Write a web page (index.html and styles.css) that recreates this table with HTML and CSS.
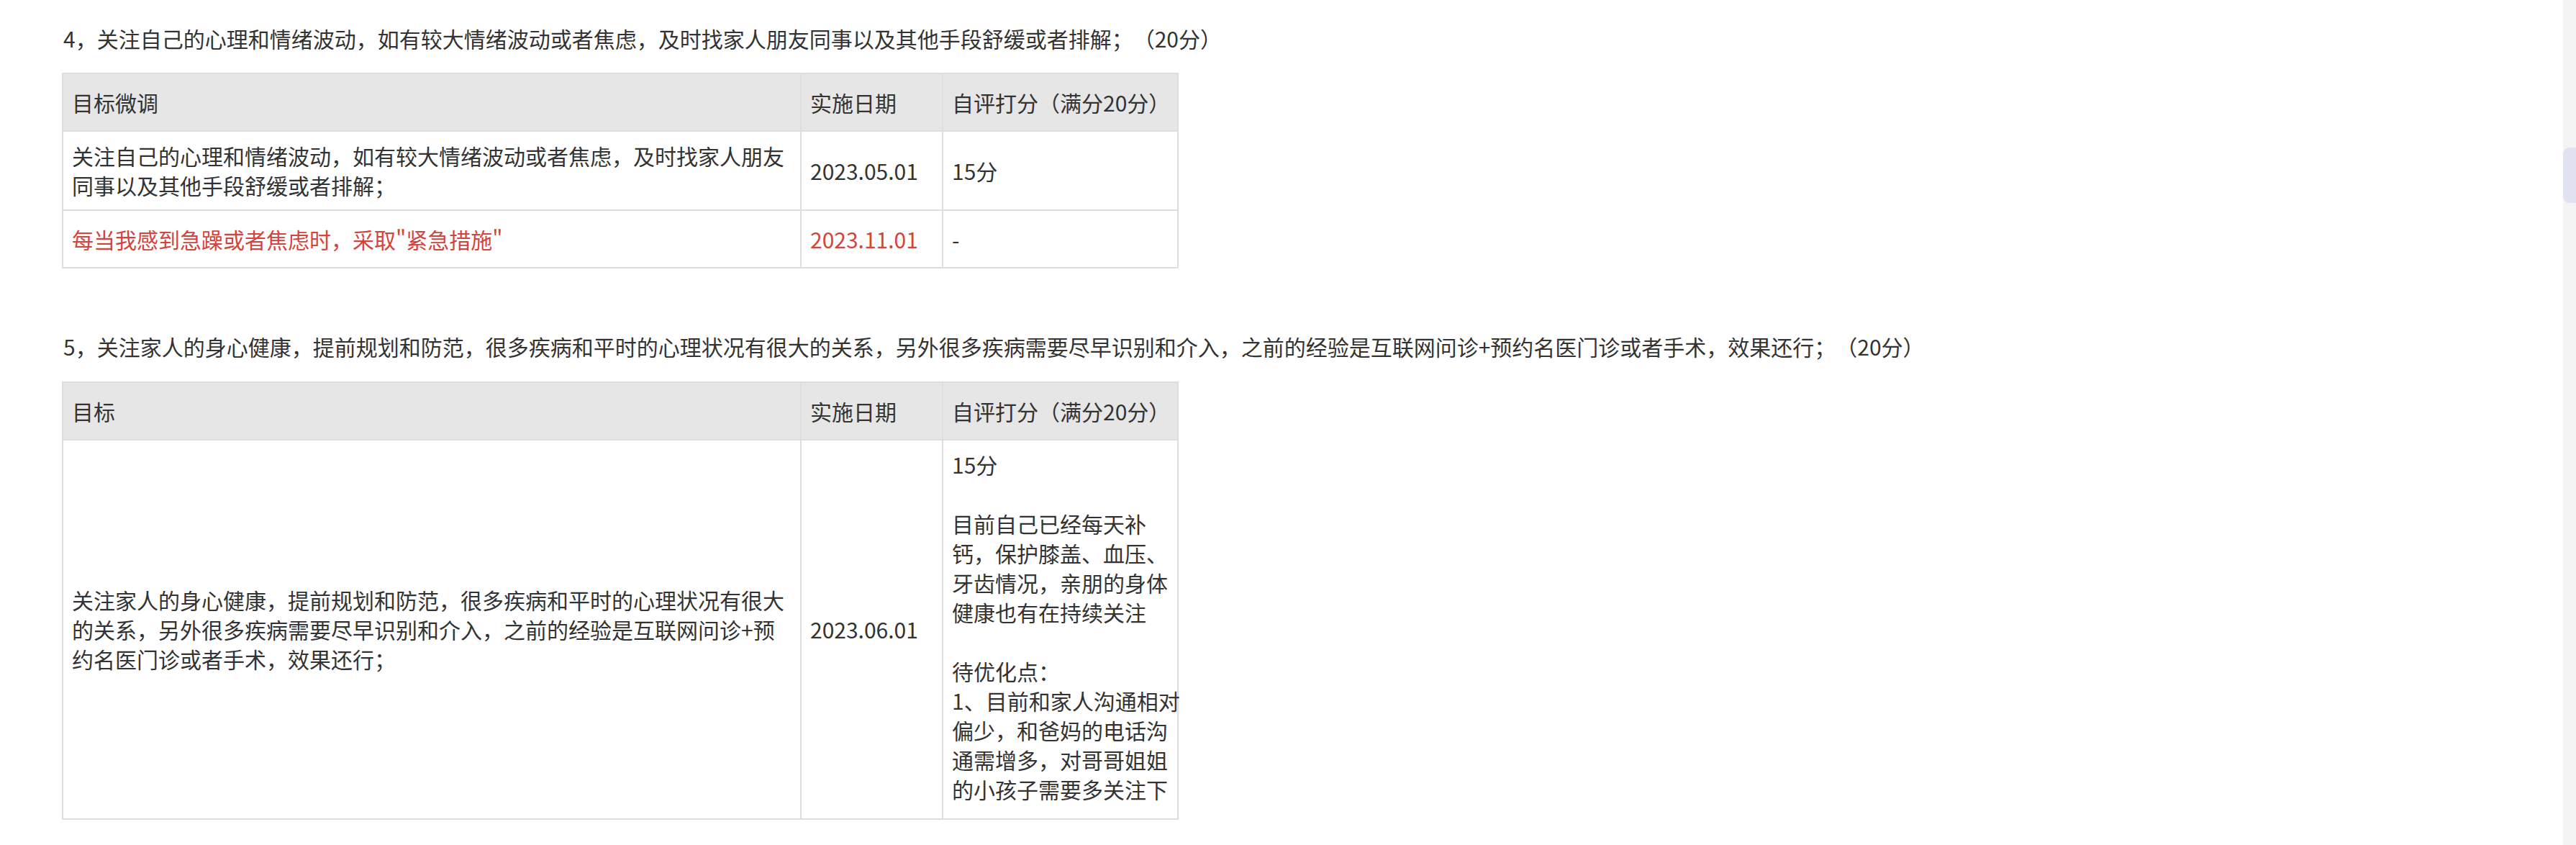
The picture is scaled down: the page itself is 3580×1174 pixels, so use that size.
FILE: index.html
```html
<!DOCTYPE html>
<html lang="zh-CN">
<head>
<meta charset="utf-8">
<title>目标自评</title>
<link rel="stylesheet" href="styles.css">
</head>
<body>
<main class="doc">
  <p class="item">4，关注自己的心理和情绪波动，如有较大情绪波动或者焦虑，及时找家人朋友同事以及其他手段舒缓或者排解；（20分）</p>
  <table class="grid">
    <colgroup><col class="c-goal"><col class="c-date"><col class="c-score"></colgroup>
    <thead>
      <tr><th>目标微调</th><th>实施日期</th><th>自评打分（满分20分）</th></tr>
    </thead>
    <tbody>
      <tr><td>关注自己的心理和情绪波动，如有较大情绪波动或者焦虑，及时找家人朋友同事以及其他手段舒缓或者排解；</td><td>2023.05.01</td><td>15分</td></tr>
      <tr class="urgent"><td>每当我感到急躁或者焦虑时，采取"紧急措施"</td><td>2023.11.01</td><td>-</td></tr>
    </tbody>
  </table>

  <p class="item item-next">5，关注家人的身心健康，提前规划和防范，很多疾病和平时的心理状况有很大的关系，另外很多疾病需要尽早识别和介入，之前的经验是互联网问诊+预约名医门诊或者手术，效果还行；（20分）</p>
  <table class="grid">
    <colgroup><col class="c-goal"><col class="c-date"><col class="c-score"></colgroup>
    <thead>
      <tr><th>目标</th><th>实施日期</th><th>自评打分（满分20分）</th></tr>
    </thead>
    <tbody>
      <tr>
        <td>关注家人的身心健康，提前规划和防范，很多疾病和平时的心理状况有很大的关系，另外很多疾病需要尽早识别和介入，之前的经验是互联网问诊+预约名医门诊或者手术，效果还行；</td>
        <td>2023.06.01</td>
        <td class="notes">15分<br><br>目前自己已经每天补<br>钙，保护膝盖、血压、<br>牙齿情况，亲朋的身体<br>健康也有在持续关注<br><br>待优化点：<br>1、目前和家人沟通相对<br>偏少，和爸妈的电话沟<br>通需增多，对哥哥姐姐<br>的小孩子需要多关注下</td>
      </tr>
    </tbody>
  </table>
</main>
<div class="scrollbar"><div class="thumb"></div></div>
</body>
</html>
```

FILE: styles.css
```css
html, body {
  margin: 0;
  padding: 0;
  background: #ffffff;
  overflow: hidden;
}

body {
  font-family: "Noto Sans CJK SC", "Noto Sans", sans-serif;
  font-size: 30px;
  line-height: 41px;
  color: #333333;
}

.doc {
  padding: 33px 0 0 86px;
}

.item {
  margin: 0 0 27px 2px;
  text-spacing-trim: space-all;
}

.item-next {
  margin-top: 88px;
  margin-bottom: 28px;
}

.grid {
  border-collapse: collapse;
  table-layout: fixed;
  width: 1550px;
}

.c-goal { width: 1026px; }
.c-date { width: 197px; }
.c-score { width: 327px; }

.grid th,
.grid td {
  border: 2px solid #dedede;
  padding: 13px 12px;
  text-align: left;
  vertical-align: middle;
  font-weight: normal;
}

.grid th {
  background: #e6e6e6;
  white-space: nowrap;
}

.grid tr {
  height: 80px;
}

.grid .urgent td {
  color: #d4433c;
}

.grid .urgent td:last-child {
  color: #333333;
}

.grid .notes {
  white-space: nowrap;
  padding-bottom: 20px;
}

.scrollbar {
  position: fixed;
  top: 0;
  right: 0;
  width: 18px;
  height: 100%;
  background: #f4f4f4;
}

.thumb {
  position: absolute;
  top: 205px;
  left: 0;
  width: 18px;
  height: 77px;
  border-radius: 9px 0 0 9px;
  background: #e0e2ef;
}
```
